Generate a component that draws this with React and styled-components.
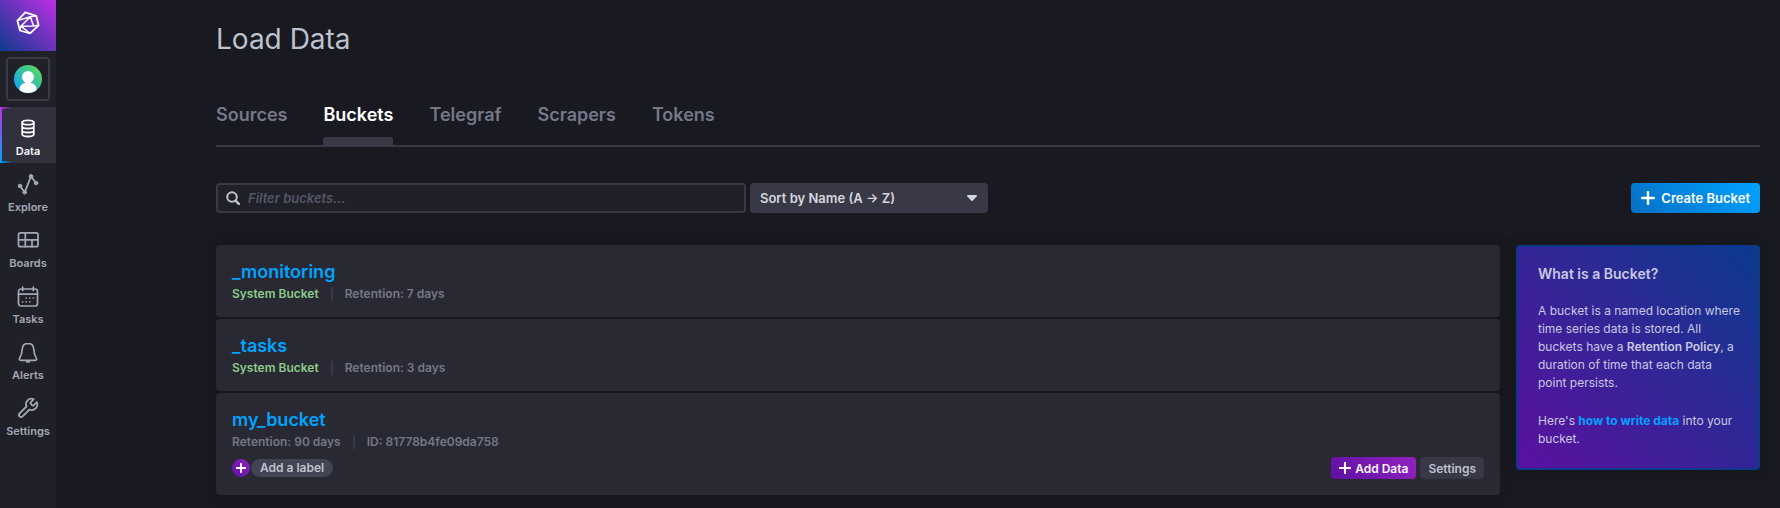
import React from "react";
import styled, { createGlobalStyle, css } from "styled-components";

const GlobalStyle = createGlobalStyle`
  *, *::before, *::after { box-sizing: border-box; }
  body {
    margin: 0;
    background: #191922;
    color: #bec2cc;
    font-family: Inter, "Liberation Sans", sans-serif;
    font-weight: 600;
  }
  button, input, select { font: inherit; }
  a { text-decoration: none; }
`;

const Shell = styled.div`
  display: flex;
  min-height: 100vh;
`;

/* ---------- Sidebar ---------- */

const Sidebar = styled.aside`
  flex: 0 0 56px;
  background: #202028;
`;

const LogoLink = styled.a`
  display: flex;
  align-items: center;
  justify-content: center;
  height: 51px;
  padding-bottom: 6px;
  background: linear-gradient(45deg, #0b3a8d, #be2ee4);
`;

const AvatarButton = styled.button`
  display: flex;
  align-items: center;
  justify-content: center;
  width: 44px;
  height: 44px;
  margin: 6px;
  padding: 0;
  border: 2px solid #383846;
  border-radius: 4px;
  background: none;
`;

const NavItem = styled.a`
  display: flex;
  flex-direction: column;
  align-items: center;
  gap: 4px;
  height: 56px;
  padding-top: 9px;
  color: #a4a8b6;
  font-size: 11px;
  line-height: 14px;

  ${(p) =>
    p.$active &&
    css`
      color: #f6f6f8;
      background:
        linear-gradient(to bottom, #be2ee4, #00a3ff) left / 2px 100% no-repeat,
        linear-gradient(to right, #be2ee4, #be2ee400) left top / 12px 2px no-repeat,
        linear-gradient(to right, #00a3ff, #00a3ff00) left bottom / 12px 2px no-repeat,
        #31313d;
    `}
`;

/* ---------- Page ---------- */

const Main = styled.main`
  flex: 1;
  min-width: 0;
  padding: 23px 20px 12px 160px;
`;

const PageTitle = styled.h1`
  margin: 0 0 49px;
  font-size: 28px;
  line-height: 32px;
  font-weight: 400;
`;

const Tabs = styled.nav`
  display: flex;
  gap: 36px;
  border-bottom: 2px solid #383846;
`;

const Tab = styled.a`
  color: ${(p) => (p.$active ? "#ffffff" : "#757888")};
  font-size: 18px;
  line-height: 22px;

  &::after {
    content: "";
    display: block;
    height: 8px;
    margin-top: 11px;
    border-radius: 3px 3px 0 0;
    background: ${(p) => (p.$active ? "#383846" : "transparent")};
  }
`;

const Toolbar = styled.div`
  display: flex;
  gap: 4px;
  margin: 36px 0 32px;
  font-size: 13px;
`;

const SearchField = styled.label`
  display: flex;
  align-items: center;
  gap: 8px;
  flex: 0 1 530px;
  height: 30px;
  padding: 0 8px;
  border: 2px solid #383846;
  border-radius: 4px;
  background: #202028;
`;

const SearchInput = styled.input`
  flex: 1;
  min-width: 0;
  padding: 0;
  border: 0;
  outline: 0;
  background: none;
  color: #bec2cc;

  &::placeholder {
    color: #545667;
    font-style: italic;
    opacity: 1;
  }
`;

const SortField = styled.div`
  display: grid;
  flex: 0 1 238px;
  align-items: center;

  & > * { grid-area: 1 / 1; }
  & > svg { justify-self: end; margin-right: 10px; pointer-events: none; }
`;

const SortSelect = styled.select`
  appearance: none;
  width: 100%;
  height: 30px;
  padding: 0 28px 0 10px;
  border: 0;
  border-radius: 4px;
  background: #383846;
  color: #d4d7dd;
`;

const buttonLooks = {
  primary: css`background: linear-gradient(45deg, #066fc5, #00a3ff); color: #ffffff;`,
  secondary: css`background: linear-gradient(45deg, #5c10a0, #9322c3); color: #f6f6f8;`,
  plain: css`background: #383846; color: #bec2cc;`,
};

const Button = styled.button`
  display: flex;
  align-items: center;
  justify-content: center;
  gap: ${(p) => (p.$small ? "4px" : "6px")};
  height: ${(p) => (p.$small ? "22px" : "30px")};
  padding: 0 ${(p) => (p.$small ? "8px" : "10px")};
  border: 0;
  border-radius: 4px;
  font-size: ${(p) => (p.$small ? "12px" : "13px")};
  white-space: nowrap;
  ${(p) => buttonLooks[p.$look]}
`;

const ToolbarEnd = styled.div`
  margin-left: auto;
`;

const Columns = styled.div`
  display: grid;
  grid-template-columns: minmax(0, 1fr) 244px;
  align-items: start;
  gap: 16px;
`;

/* ---------- Buckets ---------- */

const BucketList = styled.div`
  display: grid;
  gap: 2px;
  border-radius: 4px;
  box-shadow: 0 0 10px 2px #17181a;
  background: #17171d;
`;

const Card = styled.article`
  padding: 16px;
  border-radius: 4px;
  background: #292933;
`;

const BucketName = styled.h2`
  margin: 0 0 4px;
  font-size: 18px;
  line-height: 22px;
  font-weight: 600;

  a { color: #00a3ff; }
`;

const Meta = styled.div`
  display: flex;
  color: #757888;
  font-size: 12px;
  line-height: 14px;
`;

const MetaItem = styled.span`
  color: ${(p) => (p.$system ? "#8ccb88" : "inherit")};

  & + & {
    margin-left: 12px;
    padding-left: 12px;
    border-left: 2px solid #383846;
  }
`;

const CardFooter = styled.div`
  display: flex;
  align-items: center;
  justify-content: space-between;
  margin-top: 8px;
`;

const Group = styled.div`
  display: flex;
  gap: ${(p) => p.$gap};
`;

const AddLabelButton = styled.button`
  display: flex;
  align-items: center;
  justify-content: center;
  width: 18px;
  height: 18px;
  padding: 0;
  border: 0;
  border-radius: 50%;
  background: linear-gradient(45deg, #5c10a0, #9322c3);
  color: #ffffff;
`;

const LabelPill = styled.button`
  height: 18px;
  padding: 0 9px;
  border: 0;
  border-radius: 9px;
  background: #434453;
  color: #bec2cc;
  font-size: 12px;
  line-height: 18px;
`;

/* ---------- Help panel ---------- */

const HelpPanel = styled.aside`
  padding: 18px 16px 20px 20px;
  border: 2px solid #0b3a8d;
  border-radius: 4px;
  background: linear-gradient(45deg, #5c10a0, #0b3a8d);
  box-shadow: 0 0 10px 2px #17181a;
  color: #c8c8e0;
`;

const HelpTitle = styled.h2`
  margin: 0 0 19px;
  font-size: 14px;
  line-height: 18px;
  font-weight: 600;
`;

const HelpText = styled.p`
  margin: 0;
  font-size: 12px;
  line-height: 18px;
  font-weight: 400;

  & + & { margin-top: 20px; }
  strong { font-weight: 600; }
  a { color: #00a3ff; font-weight: 700; }
`;

/* ---------- Icons ---------- */

const LineIcon = ({ size = 24, width = 2, children }) => (
  <svg width={size} height={size} viewBox={`0 0 ${size} ${size}`} fill="none" stroke="currentColor"
    strokeWidth={width} strokeLinecap="round" strokeLinejoin="round" aria-hidden="true">
    {children}
  </svg>
);

const Logo = () => (
  <svg width="24" height="24" viewBox="0 0 24 24" fill="none" stroke="#fff" strokeWidth="1.5" strokeLinejoin="round" aria-hidden="true">
    <path d="M9.300 1.400 20.200 4.800l2.400 9.500-8.500 8.100-10.200-2.900L1.400 9.600z" strokeWidth="1.800" />
    <path d="M14.300 5.800 4.800 15.200l12.800-.3zM1.400 9.600l12.900-3.800 5.900-1M4.800 15.200l-.9 4.300M4.800 15.200l9.300 7.200M17.600 14.900l5-.6" />
  </svg>
);

const Avatar = () => (
  <svg width="28" height="28" viewBox="0 0 28 28" aria-hidden="true">
    <defs>
      <linearGradient id="avatar-fill" x1="0" y1="1" x2="1" y2="0">
        <stop offset="0.1" stopColor="#12a6f0" />
        <stop offset="0.9" stopColor="#5ad85e" />
      </linearGradient>
      <clipPath id="avatar-clip"><circle cx="14" cy="14" r="14" /></clipPath>
    </defs>
    <circle cx="14" cy="14" r="14" fill="url(#avatar-fill)" />
    <g fill="#fff" clipPath="url(#avatar-clip)">
      <circle cx="14" cy="12" r="6" />
      <path d="M11 15h6v3c3.600.8 5.500 3 5.500 6.500V28h-17v-3.500C5.500 21 7.400 18.800 11 18z" />
    </g>
  </svg>
);

const Plus = ({ size, width }) => (
  <svg width={size} height={size} viewBox="0 0 14 14" fill="none" stroke="currentColor" strokeWidth={width} strokeLinecap="round" aria-hidden="true">
    <path d="M7 1v12M1 7h12" />
  </svg>
);

const NAV = [
  {
    name: "Data", active: true, width: 1.8,
    icon: (
      <>
        <ellipse cx="12" cy="6.500" rx="5.800" ry="2.200" />
        <path d="M6.200 6.500v11.800c0 1.200 2.600 2.200 5.800 2.200s5.800-1 5.800-2.200V6.500M6.200 10.500c0 1.200 2.600 2 5.800 2s5.800-.8 5.800-2M6.200 14.500c0 1.200 2.600 2 5.800 2s5.800-.8 5.800-2" />
      </>
    ),
  },
  {
    name: "Explore", width: 1.8,
    icon: (
      <>
        <path d="m4 14 4.700 6.300 6.300-16 5 6.700" />
        <g fill="currentColor" strokeWidth="1">
          <circle cx="4" cy="14" r="1.800" /><circle cx="8.700" cy="20.300" r="1.800" />
          <circle cx="15" cy="4.300" r="1.800" /><circle cx="20" cy="11" r="1.800" />
        </g>
      </>
    ),
  },
  {
    name: "Boards", width: 1.7,
    icon: (
      <>
        <rect x="2.500" y="4.900" width="19.500" height="13.800" rx="2" />
        <path d="M2.500 11.900H22M9.300 4.900v13.800M16 11.900v6.800" />
      </>
    ),
  },
  {
    name: "Tasks", width: 1.7,
    icon: (
      <>
        <rect x="2.500" y="5" width="19" height="17" rx="2.500" />
        <path d="M2.500 10.200h19M6.700 3v3.500M17.300 3v3.500" />
        <path d="M10.200 14h0M13.800 14h0M17.400 14h0M6.600 17.800h0M10.200 17.800h0M13.800 17.800h0" />
      </>
    ),
  },
  {
    name: "Alerts", width: 1.7,
    icon: (
      <>
        <path d="M12 3.400c-3.600 0-5.600 2.500-5.800 5.900-.2 4.200-.7 6-2.300 8.300-1 1.500-.6 2.700.9 2.700h14.400c1.500 0 1.900-1.200.9-2.700-1.600-2.300-2.100-4.100-2.300-8.300-.2-3.400-2.200-5.900-5.800-5.900z" />
        <path d="M10.800 21.800h2.400" />
      </>
    ),
  },
  {
    name: "Settings", width: 1.8,
    icon: (
      <path d="M14.700 6.300a1 1 0 0 0 0 1.400l1.600 1.600a1 1 0 0 0 1.400 0l3.100-3.100a5.500 5.500 0 0 1-7.300 7.300l-6.900 6.900a2.120 2.120 0 0 1-3-3l6.900-6.900a5.500 5.500 0 0 1 7.300-7.300z" />
    ),
  },
];

const TABS = ["Sources", "Buckets", "Telegraf", "Scrapers", "Tokens"];

const BUCKETS = [
  { name: "_monitoring", system: true, meta: ["System Bucket", "Retention: 7 days"] },
  { name: "_tasks", system: true, meta: ["System Bucket", "Retention: 3 days"] },
  { name: "my_bucket", meta: ["Retention: 90 days", "ID: 81778b4fe09da758"] },
];

const Bucket = ({ name, system, meta }) => (
  <Card>
    <BucketName><a href="#bucket">{name}</a></BucketName>
    <Meta>
      {meta.map((text, i) => (
        <MetaItem key={text} $system={system && i === 0}>{text}</MetaItem>
      ))}
    </Meta>
    {!system && (
      <CardFooter>
        <Group $gap="1px">
          <AddLabelButton aria-label="Add label"><Plus size={10} width={2.600} /></AddLabelButton>
          <LabelPill>Add a label</LabelPill>
        </Group>
        <Group $gap="4px">
          <Button $small $look="secondary"><Plus size={12} width={2.400} />Add Data</Button>
          <Button $small $look="plain">Settings</Button>
        </Group>
      </CardFooter>
    )}
  </Card>
);

export default function App() {
  return (
    <Shell>
      <GlobalStyle />
      <Sidebar>
        <LogoLink href="#home" aria-label="Home"><Logo /></LogoLink>
        <AvatarButton aria-label="Account"><Avatar /></AvatarButton>
        <nav>
          {NAV.map((item) => (
            <NavItem key={item.name} href="#nav" $active={item.active}>
              <LineIcon width={item.width}>{item.icon}</LineIcon>
              {item.name}
            </NavItem>
          ))}
        </nav>
      </Sidebar>
      <Main>
        <PageTitle>Load Data</PageTitle>
        <Tabs>
          {TABS.map((tab) => (
            <Tab key={tab} href="#tab" $active={tab === "Buckets"}>{tab}</Tab>
          ))}
        </Tabs>
        <Toolbar>
          <SearchField>
            <LineIcon size={14}>
              <circle cx="6" cy="6" r="4.800" />
              <path d="m9.800 9.800 3 3" strokeWidth="2.600" />
            </LineIcon>
            <SearchInput type="text" placeholder="Filter buckets..." aria-label="Filter buckets" />
          </SearchField>
          <SortField>
            <SortSelect aria-label="Sort buckets">
              <option>Sort by Name (A → Z)</option>
            </SortSelect>
            <svg width="12" height="8" viewBox="0 0 12 8" fill="#d4d7dd" aria-hidden="true">
              <path d="M1.800 1h8.400c.8 0 1.100.8.600 1.300L6.700 6.700c-.4.400-1 .4-1.400 0L1.200 2.300C.7 1.800 1 1 1.800 1z" />
            </svg>
          </SortField>
          <ToolbarEnd>
            <Button $look="primary"><Plus size={14} width={2.400} />Create Bucket</Button>
          </ToolbarEnd>
        </Toolbar>
        <Columns>
          <BucketList>
            {BUCKETS.map((bucket) => <Bucket key={bucket.name} {...bucket} />)}
          </BucketList>
          <HelpPanel>
            <HelpTitle>What is a Bucket?</HelpTitle>
            <HelpText>
              A bucket is a named location where time series data is stored. All buckets have a{" "}
              <strong>Retention Policy</strong>, a duration of time that each data point persists.
            </HelpText>
            <HelpText>
              Here's <a href="#docs">how to write data</a> into your bucket.
            </HelpText>
          </HelpPanel>
        </Columns>
      </Main>
    </Shell>
  );
}
